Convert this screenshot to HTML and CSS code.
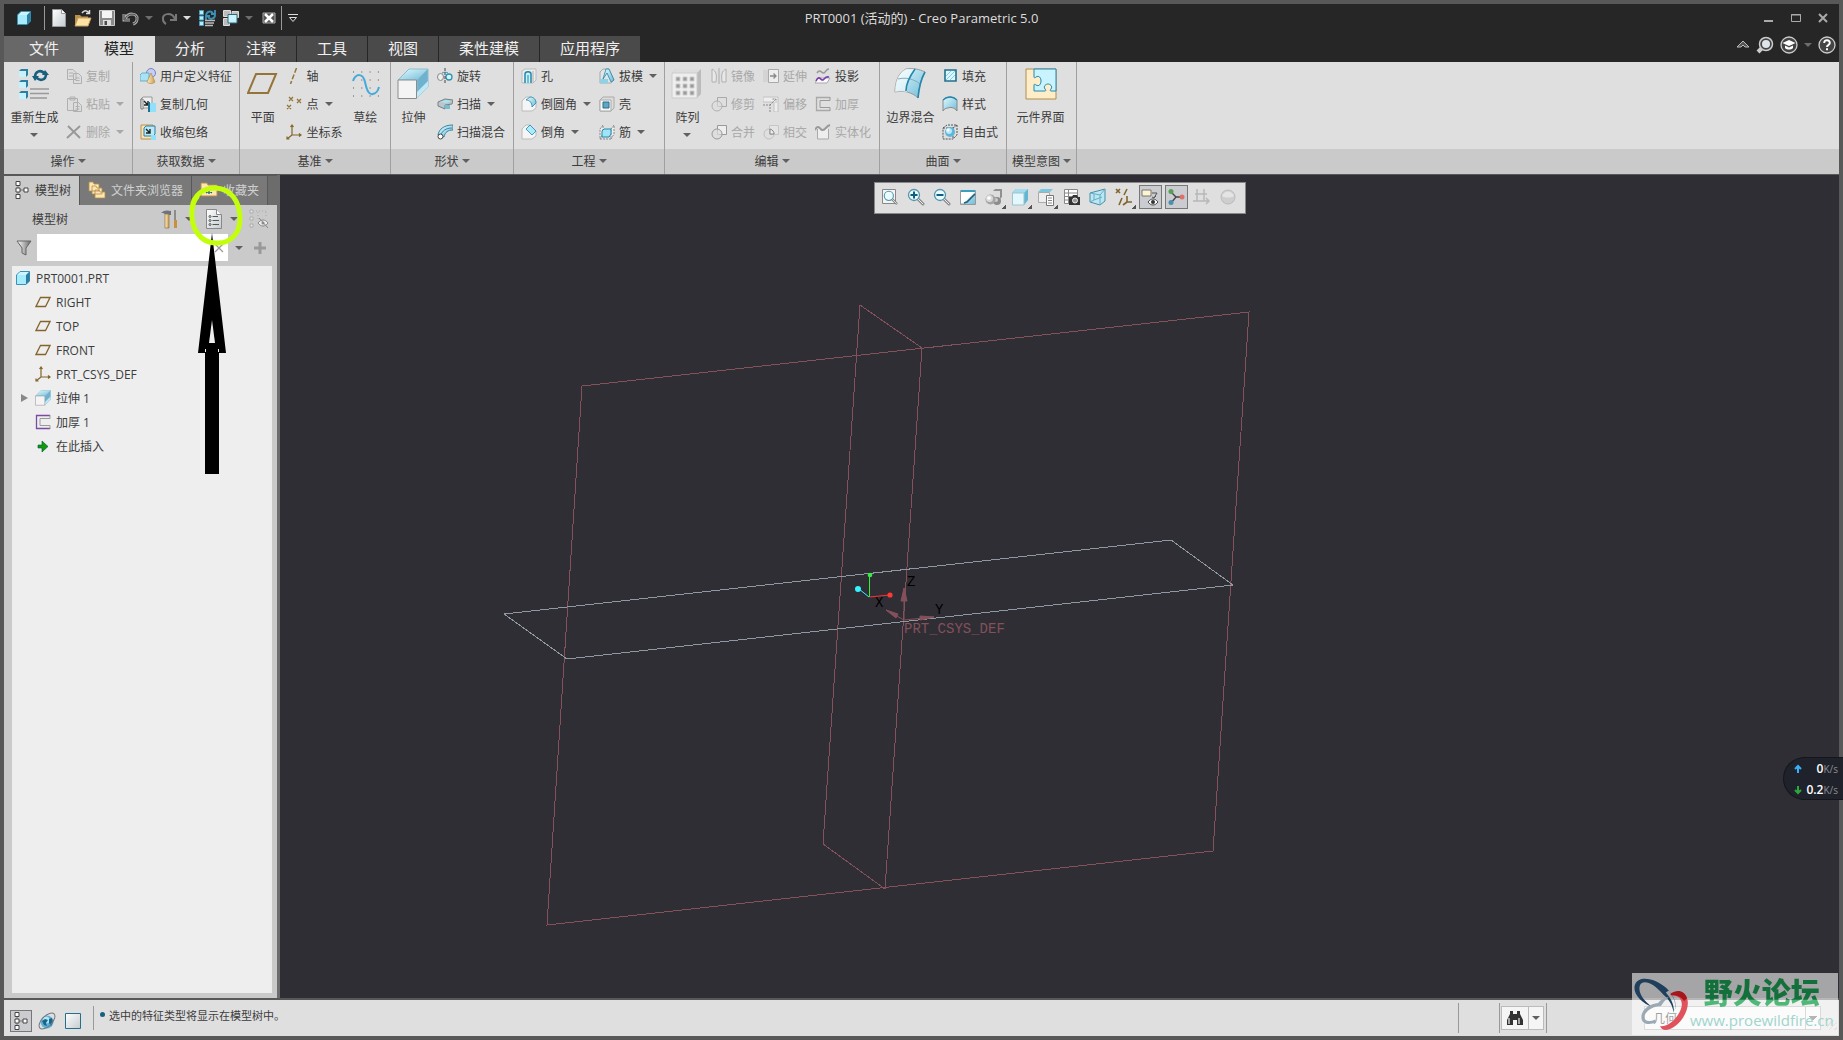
FILE: index.html
```html
<!DOCTYPE html>
<html lang="zh-CN">
<head>
    <meta charset="UTF-8">
    <meta name="viewport" content="width=device-width, initial-scale=1.0">
    <title>PRT0001 (活动的) - Creo Parametric 5.0</title>
    <link rel="stylesheet" href="styles.css">
</head>
<body>
    <!-- shared icons -->
    <svg class="defs" aria-hidden="true">
        <defs>
            <linearGradient id="gBlue" x1="0" y1="0" x2="1" y2="1"><stop offset="0" stop-color="#e4faff"/><stop offset="1" stop-color="#6fbcd8"/></linearGradient>
            <linearGradient id="gPaper" x1="0" y1="0" x2="1" y2="1"><stop offset="0" stop-color="#fff"/><stop offset="1" stop-color="#c4ccd0"/></linearGradient>
            <linearGradient id="gGold" x1="0" y1="0" x2="1" y2="0"><stop offset="0" stop-color="#fff0c8"/><stop offset="1" stop-color="#c89c50"/></linearGradient>
            <linearGradient id="gMetal" x1="0" y1="0" x2="1" y2="0"><stop offset="0" stop-color="#fff"/><stop offset="1" stop-color="#666"/></linearGradient>
        </defs>
        <symbol id="cube" viewBox="0 0 16 16">
            <path d="M1.500 5 5 1.500h9.500V11L11 14.500H1.500z" fill="#cdf5ff" stroke="#3b93b4"/>
            <path d="M11 5l3.500-3.500V11L11 14.500z" fill="#2a7fa3"/>
            <path d="M2 5h9v9H2z" fill="#a6ecfc"/>
        </symbol>
        <symbol id="plane" viewBox="0 0 16 16">
            <path d="M5.500 3.500h9.500l-4.500 9H1z" fill="none" stroke="#83652c" stroke-width="1.300"/>
        </symbol>
        <symbol id="csys" viewBox="0 0 16 16">
            <path d="M6 1v10h9M6 11l-5 4M4.500 3 6 1l1.500 2M13 9.500l2 1.500-2 1.500M1 12.500V15h2.500" fill="none" stroke="#83652c" stroke-width="1.200"/>
        </symbol>
        <symbol id="extrude" viewBox="0 0 32 32">
            <path d="M1 12 12 1h19L20 12z" fill="url(#gBlue)" stroke="#8abdd0"/>
            <path d="M20 12 31 1v18L20 30z" fill="#6fb2cf" stroke="#8abdd0"/>
            <path d="M20 24 31 13v6L20 30z" fill="#c0e8f4"/>
            <path d="M1 12h18.500v18.500H1z" fill="#f4f4f4" stroke="#8c8c8c"/>
        </symbol>
        <symbol id="thicken" viewBox="0 0 16 16">
            <path d="M15 1.500H1.500v13H15" fill="none" stroke="currentColor" stroke-width="1.300"/>
            <path d="M15 1v3.500H5v7h10V15" fill="none" stroke="#999"/>
        </symbol>
        <symbol id="treeicon" viewBox="0 0 16 20">
            <path d="M4 3v14M4 10h8" stroke="#777" fill="none"/>
            <path d="M2 1.500h4v4H2zM2 8h4v4H2zM2 14.500h4v4H2zM10 8h4v4h-4z" fill="#fff" stroke="#444"/>
        </symbol>
        <symbol id="lens" viewBox="0 0 18 18">
            <path d="M10 10l6 6" stroke="#888" stroke-width="3" stroke-linecap="round"/>
            <path d="M10 10l6 6" stroke="#eee" stroke-linecap="round"/>
            <circle cx="7" cy="7" r="5.500" fill="#e9fbff" stroke="#5594ac" stroke-width="1.300"/>
        </symbol>
    </svg>

    <div class="window">
        <header class="titlebar">
            <nav class="quick" aria-label="快速访问工具栏">
                <span class="app-icon"><svg class="i16"><use href="#cube"/></svg></span>
                <i class="vline"></i>
                <button aria-label="新建"><svg class="i18" viewBox="0 0 18 18"><path d="M2.500.5h9l4 4v13h-13z" fill="url(#gPaper)" stroke="#999"/><path d="M11.500.5v4h4" fill="#fff" stroke="#999"/></svg></button>
                <button aria-label="打开"><svg class="i18" viewBox="0 0 18 18"><path d="M1 6h5l1.500 1.500H14V16H1z" fill="#b98f4c"/><path d="M1 17l3-8h13l-3 8z" fill="#ffe3a4" stroke="#c8a15e"/><path d="M8 4c2-3 5-3 7 0M15.500 1v3.500H12" fill="none" stroke="#ddd" stroke-width="1.500"/></svg></button>
                <button aria-label="保存"><svg class="i18" viewBox="0 0 18 18"><path d="M1.500 1.500h15v15h-15z" fill="#8b8b8b" stroke="#ccc"/><path d="M4 2h10v7H4z" fill="#f4f4f4"/><path d="M5 11h8v5.500H5z" fill="#ddd"/><path d="M6.500 12h2.500v4H6.500z" fill="#4a4a4a"/></svg></button>
                <button aria-label="撤消"><svg class="i18" viewBox="0 0 18 18"><path d="M2 5v6h6M3 10c3-7 13-6 12 0 0 2-1 4-4 5" fill="none" stroke="#aaa" stroke-width="3"/><path d="M2 5v6h6M3 10c3-7 13-6 12 0 0 2-1 4-4 5" fill="none" stroke="#444"/></svg></button>
                <i class="caret dim"></i>
                <button aria-label="重做"><svg class="i18" viewBox="0 0 18 18"><path d="M16 5v6h-6M15 10C12 3 2 4 3 10c0 2 1 4 3 5" fill="none" stroke="#777" stroke-width="2"/></svg></button>
                <i class="caret light"></i>
                <button aria-label="重新生成模型"><svg class="i18" viewBox="0 0 18 18"><path d="M1.500 1.500h4v4h-4zM1.500 7h4v4h-4zM1.500 12.500h4v4h-4z" fill="#b9ecfa" stroke="#4f9cba"/><path d="M8 7c0-4 4-6 7-3M17 6c0 4-5 5-7 2M13 5h4V1M12 7H8v4" fill="none" stroke="#3b92b9" stroke-width="1.800"/><path d="M7 11.500h10M7 14h9M7 16.500h8" stroke="#bbb" stroke-width="1.500"/></svg></button>
                <button aria-label="窗口"><svg class="i18" viewBox="0 0 18 18"><path d="M1.500 1.500h7v6h-7zM10 2.500h6.500v6H10zM1.500 9.500h6v7h-6z" fill="#bbb" stroke="#ddd"/><path d="M6 5.500h9V14H6z" fill="#c8f4ff" stroke="#367"/></svg></button>
                <i class="caret dim"></i>
                <button aria-label="关闭窗口"><svg class="i18" viewBox="0 0 18 18"><path d="M3 4h12v10H3z" fill="#555" stroke="#aaa"/><path d="M5 5l8 8M13 5l-8 8" stroke="#fff" stroke-width="2.500"/></svg></button>
                <i class="vline"></i>
                <button class="slim" aria-label="自定义"><svg class="i10" viewBox="0 0 10 10"><path d="M0 1.500h10M1.500 4.500h7L5 8.500z" fill="none" stroke="#ddd"/></svg></button>
            </nav>
            <h1>PRT0001 (活动的) - Creo Parametric 5.0</h1>
            <div class="winbtns">
                <button aria-label="最小化"><svg class="i10" viewBox="0 0 10 10"><path d="M0 8h9" stroke="#aaa" stroke-width="2"/></svg></button>
                <button aria-label="最大化"><svg class="i10" viewBox="0 0 10 10"><path d="M.5 1.500h9v7h-9zM0 2h10" fill="none" stroke="#aaa"/></svg></button>
                <button aria-label="关闭"><svg class="i10" viewBox="0 0 10 10"><path d="M1 1l8 8M9 1L1 9" stroke="#aaa" stroke-width="2"/></svg></button>
            </div>
        </header>

        <div class="tabbar">
            <nav class="tabs">
                <button class="file">文件</button>
                <button class="active">模型</button>
                <button>分析</button>
                <button>注释</button>
                <button>工具</button>
                <button>视图</button>
                <button>柔性建模</button>
                <button>应用程序</button>
            </nav>
            <div class="help">
                <button aria-label="折叠功能区"><svg class="i14" viewBox="0 0 14 14"><path d="M1 9l6-6 6 6H9L7 7 5 9z" fill="#555" stroke="#bbb"/></svg></button>
                <button aria-label="搜索"><svg class="i18" viewBox="0 0 18 18"><path d="M6 12l-4 4" stroke="#ccc" stroke-width="4"/><circle cx="10" cy="8" r="6.500" fill="#444" stroke="#ccc" stroke-width="1.500"/><circle cx="10" cy="8" r="4" fill="#dfe6ea"/></svg></button>
                <button aria-label="学习"><svg class="i18" viewBox="0 0 18 18"><circle cx="9" cy="9" r="8" fill="#444" stroke="#ccc" stroke-width="1.300"/><path d="M2.500 7 9 4l6.500 3L9 10z" fill="#fff"/><path d="M5 9.500l4 2 4-2V12c-2 2-6 2-8 0z" fill="#fff"/></svg></button>
                <i class="caret dim"></i>
                <button aria-label="帮助"><svg class="i18" viewBox="0 0 18 18"><circle cx="9" cy="9" r="8" fill="#444" stroke="#ccc" stroke-width="1.300"/><path d="M6.200 7c0-4 5.800-3.500 5.600 0C11.600 9 9 9 9 11" fill="none" stroke="#fff" stroke-width="2"/><path d="M8 12.300h2v2H8z" fill="#fff"/></svg></button>
            </div>
        </div>

        <section class="ribbon">
            <div class="group">
                <div class="tools">
                    <button class="big wide"><svg class="i32" viewBox="0 0 32 32"><path d="M1 3l2-2h7v6l-2 2H1zM1 14l2-2h7v6l-2 2H1zM1 25l2-2h7v6l-2 2H1z" fill="#2a7fa3"/><path d="M1 3h7v6H1zM1 14h7v6H1zM1 25h7v6H1z" fill="#c5f2fc"/><path d="M17 9c0-5 5-8 9-4M28 6c0 6-6 8-10 3" fill="none" stroke="#195f80" stroke-width="2.600"/><path d="M14 8h7l-4 5zM24 7h7l-4-5z" fill="#195f80"/><path d="M12 21h19M12 25.500h19M12 30h17" stroke="#999" stroke-width="1.500"/></svg><span>重新生成</span><i class="caret"></i></button>
                    <div class="col">
                        <button disabled><svg class="i16" viewBox="0 0 16 16"><path d="M1.500 1.500H7l3 3v7H1.500z M7.500 5.500h5l3 3v7h-8z" fill="#ddd" stroke="#b0b0b0"/><path d="M3 5h4M3 8h4M9.500 10h4M9.500 12.500h4" stroke="#b0b0b0"/></svg>复制</button>
                        <button disabled><svg class="i16" viewBox="0 0 16 16"><path d="M1.500 2.500h10v12h-10zM4 1h5v3H4zM7.500 6.500h5l3 3v6h-8z" fill="#ddd" stroke="#b0b0b0"/><path d="M9.500 10.500h4M9.500 13h4" stroke="#b0b0b0"/></svg>粘贴<i class="caret"></i></button>
                        <button disabled><svg class="i16" viewBox="0 0 16 16"><path d="M2 2l12 12M14 2L1 14" stroke="#999" stroke-width="2"/></svg>删除<i class="caret"></i></button>
                    </div>
                </div>
                <button class="label">操作<i class="caret"></i></button>
            </div>

            <div class="group">
                <div class="tools">
                    <div class="col">
                        <button><svg class="i16" viewBox="0 0 16 16"><circle cx="11" cy="5" r="4.500" fill="#c5cff5" stroke="#7484bd"/><path d="M0 7l2-2h7v6l-2 2H0z" fill="#a6e4f5" stroke="#4a9ab7" stroke-width=".7"/><path d="M11 5l4 9c-2 2-6 2-8 0z" fill="url(#gGold)" stroke="#b98f4c" stroke-width=".7"/></svg>用户定义特征</button>
                        <button><svg class="i16" viewBox="0 0 16 16"><path d="M1 3l2-2h9v11H1z" fill="#eee" stroke="#999"/><path d="M1 3h2v10H1z" fill="#fff" stroke="#777"/><path d="M4 5l4 4M8 5v4H4" fill="none" stroke="#222" stroke-width="1.400"/><path d="M10 7h6v9h-6z" fill="#8fe0f8"/><path d="M8 6h2v10H8z" fill="#1d7092"/></svg>复制几何</button>
                        <button><svg class="i16" viewBox="0 0 16 16"><path d="M1 1h12v14H1z" fill="#fbe4b0" stroke="#b98f4c"/><path d="M4 4l2-2h9v8l-2 2H4z" fill="#b6eaf8" stroke="#2a7fa3"/><path d="M6 5l4 4M10 5v4H6" fill="none" stroke="#222" stroke-width="1.400"/><path d="M11 11h5v5h-5z" fill="#8fe0f8"/></svg>收缩包络</button>
                    </div>
                </div>
                <button class="label">获取数据<i class="caret"></i></button>
            </div>

            <div class="group">
                <div class="tools">
                    <button class="big"><svg class="i32" viewBox="0 0 32 32"><path d="M9 6h20l-8 19H1z" fill="none" stroke="#957439" stroke-width="2"/></svg><span>平面</span></button>
                    <div class="col">
                        <button><svg class="i16" viewBox="0 0 16 16"><path d="M10.500 0 4.500 16" stroke="#957439" stroke-width="1.500" stroke-dasharray="5 2"/></svg>轴</button>
                        <button><svg class="i16" viewBox="0 0 16 16"><path d="M3 1l4 4M7 1L3 5M11 3l4 4M15 3l-4 4M1 9l4 4M5 9l-4 4" stroke="#957439" stroke-width="1.300"/></svg>点<i class="caret"></i></button>
                        <button><svg class="i16"><use href="#csys"/></svg>坐标系</button>
                    </div>
                    <button class="big"><svg class="i32" viewBox="0 0 32 32"><path d="M4 4h26M4 12h26M4 20h26M4 28h26" stroke="#555" stroke-dasharray="1 7.300"/><path d="M4 13c3-8 10-8 12 1s4 13 8 12 5-3 6-7" fill="none" stroke="#43aad9" stroke-width="2"/></svg><span>草绘</span></button>
                </div>
                <button class="label">基准<i class="caret"></i></button>
            </div>

            <div class="group">
                <div class="tools">
                    <button class="big"><svg class="i32"><use href="#extrude"/></svg><span>拉伸</span></button>
                    <div class="col">
                        <button><svg class="i16" viewBox="0 0 16 16"><ellipse cx="3.500" cy="9" rx="3" ry="3.500" fill="#eee" stroke="#888"/><circle cx="12" cy="9" r="3" fill="#d5f5fc" stroke="#2f93b5" stroke-width="1.300"/><path d="M8 0v16" stroke="#444" stroke-dasharray="3 1"/><path d="M5 5c2-1 4-1 6 0" fill="none" stroke="#2f93b5"/></svg>旋转</button>
                        <button><svg class="i16" viewBox="0 0 16 16"><path d="M1 6l7-3 8 1-1 4-7 1v4L1 10z" fill="#bcc6ca" stroke="#738086"/><path d="M3 6l6-2 5 1-5 2z" fill="#a8e3f2"/><path d="M8 9h5v4H8z" fill="#76bdd4"/></svg>扫描<i class="caret"></i></button>
                        <button><svg class="i16" viewBox="0 0 16 16"><path d="M1 11C2 5 7 1 16 1v5c-5 0-8 2-9 7z" fill="url(#gBlue)" stroke="#3685a3"/><path d="M4 11C5 7 9 4 15 4" fill="none" stroke="#3685a3"/><circle cx="3.500" cy="12.500" r="2.500" fill="#fff" stroke="#444"/></svg>扫描混合</button>
                    </div>
                </div>
                <button class="label">形状<i class="caret"></i></button>
            </div>

            <div class="group">
                <div class="tools">
                    <div class="col">
                        <button><svg class="i16" viewBox="0 0 16 16"><path d="M1 3l3-2h11v11l-3 3H1z" fill="#eee" stroke="#bbb"/><path d="M4 15V6c0-3 6-3 6 0v9" fill="#c7f1fb" stroke="#2487ac" stroke-width="1.500"/><path d="M7 7v8" stroke="#2487ac"/><path d="M12 3v11" stroke="#aaa"/></svg>孔</button>
                        <button><svg class="i16" viewBox="0 0 16 16"><path d="M1 5l4-4h4c4 0 6 3 6 6v5l-4 3H1z" fill="#f5f5f5" stroke="#bbb"/><path d="M5 4l4-3c4 0 6 3 6 6l-4 4c0-4-2-7-6-7z" fill="url(#gBlue)" stroke="#2487ac" stroke-width=".8"/></svg>倒圆角<i class="caret"></i></button>
                        <button><svg class="i16" viewBox="0 0 16 16"><path d="M1 5l4-4h4l6 6v5l-4 3H1z" fill="#f5f5f5" stroke="#bbb"/><path d="M5 5l4-4 6 6-4 4z" fill="#a9ecfc" stroke="#2487ac" stroke-width=".8"/></svg>倒角<i class="caret"></i></button>
                    </div>
                    <div class="col">
                        <button><svg class="i16" viewBox="0 0 16 16"><path d="M1 4l3-3h6l5 11-3 3H1z" fill="#e4e4e4" stroke="#999" stroke-width=".8"/><path d="M4 11l3-10h3l5 11-3 2-4-9z" fill="url(#gBlue)" stroke="#2487ac" stroke-width=".8"/><path d="M1 11h8v4H1z" fill="#8bd3ea"/></svg>拔模<i class="caret"></i></button>
                        <button><svg class="i16" viewBox="0 0 16 16"><path d="M1 4l3-3h11v11l-3 3H1z" fill="#ddd" stroke="#aaa"/><path d="M1 4h11v11H1z" fill="#f6f6f6" stroke="#aaa"/><path d="M4 6h6v6H4z" fill="#5ca8c6" stroke="#2d6e88"/></svg>壳</button>
                        <button><svg class="i16" viewBox="0 0 16 16"><path d="M1 5l3-4v9l-3 5zM12 5l3-4v9l-3 5zM1 15h12" fill="#eee" stroke="#888" stroke-dasharray="2 1"/><path d="M3 7l2-2h7v5l-2 3H3z" fill="#9ee5f7" stroke="#2487ac"/></svg>筋<i class="caret"></i></button>
                    </div>
                </div>
                <button class="label">工程<i class="caret"></i></button>
            </div>

            <div class="group">
                <div class="tools">
                    <button class="big"><svg class="i32" viewBox="0 0 32 32"><path d="M1 5l4-4h25v25l-4 4z" fill="#bbb"/><path d="M1 5l4-4h25l-4 4z" fill="#ddd"/><path d="M1 5h25v25H1z" fill="#eee" stroke="#ccc"/><path d="M5 9h4v4H5zM12 9h4v4h-4zM19 9h4v4h-4zM5 16h4v4H5zM12 16h4v4h-4zM19 16h4v4h-4zM5 23h4v4H5zM12 23h4v4h-4zM19 23h4v4h-4z" fill="#999" stroke="#ccc"/></svg><span>阵列</span><i class="caret"></i></button>
                    <div class="col">
                        <button disabled><svg class="i16" viewBox="0 0 16 16"><path d="M1 1c4 2 5 5 4 13H1zM15 1c-4 2-5 5-4 13h4z" fill="#e8e8e8" stroke="#b0b0b0"/><path d="M8 0v16" stroke="#aaa"/></svg>镜像</button>
                        <button disabled><svg class="i16" viewBox="0 0 16 16"><path d="M6.500 1.500h9v9h-9z" fill="none" stroke="#aaa"/><circle cx="6" cy="10" r="5" fill="#ddd" fill-opacity=".6" stroke="#b0b0b0"/></svg>修剪</button>
                        <button disabled><svg class="i16" viewBox="0 0 16 16"><path d="M6.500 1.500h9v9h-9z" fill="#eee" stroke="#999"/><circle cx="6" cy="10" r="5" fill="#ddd" fill-opacity=".7" stroke="#999"/></svg>合并</button>
                    </div>
                    <div class="col">
                        <button disabled><svg class="i16" viewBox="0 0 16 16"><path d="M0 2h5v12H0z" fill="#d4d4d4"/><path d="M5.500 1.500h10v13h-10z" fill="#eee" stroke="#aaa"/><path d="M7 8h6M10.500 5.500 13 8l-2.500 2.500" fill="none" stroke="#888" stroke-width="1.300"/></svg>延伸</button>
                        <button disabled><svg class="i16" viewBox="0 0 16 16"><path d="M0 1h15v15h-4V6H0z" fill="#eee" stroke="#c2c2c2"/><path d="M0 9h7v7M7 9l6-6M9.500 3H13v3.500" fill="none" stroke="#888" stroke-dasharray="2 1"/></svg>偏移</button>
                        <button disabled><svg class="i16" viewBox="0 0 16 16"><path d="M6.500 1.500h9v9h-9z" fill="#e4e4e4" stroke="#c6c6c6"/><circle cx="6" cy="10" r="5" fill="none" stroke="#c0c0c0"/><path d="M7 5c3 1 4 3 4 5H7z" fill="#eee" stroke="#888"/></svg>相交</button>
                    </div>
                    <div class="col">
                        <button><svg class="i16" viewBox="0 0 16 16"><path d="M2 5c3-5 5 1 7 0s2-4 5-4" fill="none" stroke="#999" stroke-width="1.500"/><path d="M3 10h12l-3 5H0z" fill="#fafafa" stroke="#aaa"/><path d="M1 13c3-7 5 0 7-1s2-4 6-3" fill="none" stroke="#7a3fb0" stroke-width="1.600"/></svg>投影</button>
                        <button disabled><svg class="i16"><use href="#thicken"/></svg>加厚</button>
                        <button disabled><svg class="i16" viewBox="0 0 16 16"><path d="M2.500 5v10h11V5" fill="#eee" stroke="#aaa"/><path d="M0 6c3-6 5-1 7 0 4 1 3-4 8-5" fill="none" stroke="#999" stroke-width="2"/></svg>实体化</button>
                    </div>
                </div>
                <button class="label">编辑<i class="caret"></i></button>
            </div>

            <div class="group">
                <div class="tools">
                    <button class="big wide"><svg class="i32" viewBox="0 0 32 32"><path d="M1 24C1 11 6 4 12 1c7-1 13 0 19 3-4 7-6 15-7 26-6-6-15-8-23-6z" fill="url(#gBlue)" stroke="#999"/><path d="M1 24C1 11 6 4 12 1l9 0c-5 8-8 13-8 23-4-1-8-1-12 0z" fill="#fff" fill-opacity=".6"/><path d="M4 11c8-2 16 0 22 5" fill="none" stroke="#8ab"/><path d="M21 1c-5 7-9 14-9 22M31 4c-4 7-6 15-7 26" fill="none" stroke="#2487ac" stroke-width="1.600"/></svg><span>边界混合</span></button>
                    <div class="col">
                        <button><svg class="i16" viewBox="0 0 16 16"><path d="M3 2h11v11H3z" fill="#d9f7fd" stroke="#24708c" stroke-width="1.600"/><path d="M4 8l5-5M4 12l9-9M8 12l5-5" stroke="#8accdf"/></svg>填充</button>
                        <button><svg class="i16" viewBox="0 0 16 16"><path d="M1 4c4-4 10-4 14 0v11c-3-4-7-4-9-3-2 0-4 1-5 3z" fill="url(#gBlue)" stroke="#888"/><path d="M1 4c4-4 10-4 14 0" fill="none" stroke="#2487ac" stroke-width="1.300"/></svg>样式</button>
                        <button><svg class="i16" viewBox="0 0 16 16"><path d="M1 4l4-3h10v10l-4 4H1zM1 4h10v11M11 4l4-3" fill="none" stroke="#555" stroke-dasharray="2 1"/><circle cx="8" cy="8" r="5" fill="#5fb6d8"/><circle cx="7" cy="7" r="3" fill="#b5e8f8"/><circle cx="6" cy="6" r="1.500" fill="#fff"/></svg>自由式</button>
                    </div>
                </div>
                <button class="label">曲面<i class="caret"></i></button>
            </div>

            <div class="group">
                <div class="tools">
                    <button class="big fill"><svg class="i32" viewBox="0 0 32 32"><path d="M1 1h30v30H1z" fill="#ffedc7" stroke="#af8d4f"/><path d="M9 1h22v22h-5c-1 0-1-1 0-2 2-3-1-5-3-5s-5 2-3 5c1 1 1 2 0 2H9v-6c0-1 1-1 2 0 3 2 5-1 5-4s-2-6-5-4c-1 1-2 1-2 0z" fill="#c9f4ff" stroke="#2487ac"/></svg><span>元件界面</span></button>
                </div>
                <button class="label">模型意图<i class="caret"></i></button>
            </div>
            <div class="rest"></div>
        </section>

        <main class="main">
            <aside class="side">
                <nav class="sidetabs">
                    <button class="active"><svg class="tree-svg"><use href="#treeicon"/></svg>模型树</button>
                    <button><svg class="i18" viewBox="0 0 18 18"><path d="M1 1h4l1 2h5v7H1zM4 5h4l1 2h5v6H4zM7 9h4l1 2h5v6H7z" fill="#ffe6b0" stroke="#b38d51" stroke-width=".8"/></svg>文件夹浏览器</button>
                    <button><svg class="i18" viewBox="0 0 18 18"><path d="M1 2h6l1 2h9v11H1z" fill="#ffe6b0" stroke="#b38d51"/><path d="M9 6v7M6 8l6 4M12 8l-6 4" stroke="#17617c" stroke-width="1.300"/></svg>收藏夹</button>
                </nav>
                <div class="sidehead">
                    <h2>模型树</h2>
                    <button aria-label="设置"><svg class="i20" viewBox="0 0 20 20"><path d="M2 4c3-3 6-3 10-2v4H8L4 4z" fill="#6b7480"/><path d="M6 5h4v14H6z" fill="url(#gGold)" stroke="#94713a" stroke-width=".7"/><path d="M16 1v10" stroke="#777" stroke-width="1.500"/><path d="M15 11h3v8h-3z" fill="#c9913d"/></svg></button>
                    <i class="caret"></i>
                    <button aria-label="显示"><svg class="i20" viewBox="0 0 20 20"><path d="M2.500.5h10l5 5v14h-15z" fill="url(#gPaper)" stroke="#888"/><path d="M12.500.5v5h5" fill="#fff" stroke="#888"/><circle cx="6" cy="7.500" r="1" fill="none" stroke="#555"/><circle cx="6" cy="11.500" r="1" fill="none" stroke="#555"/><circle cx="6" cy="15.500" r="1" fill="none" stroke="#555"/><path d="M8.500 7.500H14M8.500 11.500H15M8.500 15.500H15" stroke="#555"/></svg></button>
                    <i class="caret"></i>
                    <button disabled aria-label="隐藏"><svg class="i20" viewBox="0 0 20 20"><path d="M1 1h3v3H1zM1 8h3v3H1zM1 15h3v3H1z" fill="#e8e8e8" stroke="#aaa"/><path d="M7 2h11M9 3v9M17 3v6" stroke="#aaa" stroke-dasharray="1 2"/><path d="M9 14c3-4 7-4 10 0-3 4-7 4-10 0z" fill="#eee" stroke="#888"/><circle cx="14" cy="14" r="1.500" fill="#888"/><path d="M10 9l9 10" stroke="#888"/></svg></button>
                </div>
                <div class="filter">
                    <svg class="i16" viewBox="0 0 16 16"><path d="M1 1h14l-5 7v7l-4-2V8z" fill="url(#gMetal)" stroke="#666"/></svg>
                    <div class="field">
                        <input type="text" aria-label="筛选模型树">
                        <button aria-label="清除"><svg class="i10" viewBox="0 0 10 10"><path d="M1 1l8 8M9 1L1 9" stroke="#999" stroke-width="1.200"/></svg></button>
                    </div>
                    <i class="caret"></i>
                    <button class="add" aria-label="添加"><svg class="i12" viewBox="0 0 12 12"><path d="M6 0v12M0 6h12" stroke="#999" stroke-width="3"/></svg></button>
                </div>
                <ul class="tree">
                    <li class="root"><svg class="i16"><use href="#cube"/></svg>PRT0001.PRT</li>
                    <li><svg class="i16"><use href="#plane"/></svg>RIGHT</li>
                    <li><svg class="i16"><use href="#plane"/></svg>TOP</li>
                    <li><svg class="i16"><use href="#plane"/></svg>FRONT</li>
                    <li><svg class="i16"><use href="#csys"/></svg>PRT_CSYS_DEF</li>
                    <li class="parent"><i class="expander"></i><svg class="i16"><use href="#extrude"/></svg>拉伸 1</li>
                    <li class="thick"><svg class="i16"><use href="#thicken"/></svg>加厚 1</li>
                    <li><svg class="i16" viewBox="0 0 16 16"><path d="M3 7h4V3l6 5.500L7 14v-4H3z" fill="#109a10" stroke="#053" stroke-width=".6"/></svg>在此插入</li>
                </ul>
                <!-- hand drawn marker over the display button -->
                <svg class="marker" viewBox="0 0 62 300" aria-hidden="true">
                    <path d="M25 53 11 173h7v121h14V173h7z"/>
                    <path d="M25 140l-3 23h6z" fill="#eee"/>
                    <path d="M18 169h1v3h-1zM31 169h1v3h-1z" fill="#eee"/>
                    <path d="M5 29C6 14 17 8 29 8c14 1 24 12 24 31 0 15-10 24-22 24C14 64 3 49 5 29c1-5 2-9 5-12" fill="none" stroke="#c3ff0c" stroke-width="5" stroke-linecap="round"/>
                </svg>
            </aside>

            <section class="canvas">
                <svg class="scene" viewBox="280 175 1559 823">
                    <path class="datum" d="M582 386 1249 312 1213 851 547 925zM860 305l62 43-37 541-62-45z"/>
                    <path class="datum sel" d="M504 614l667-74 62 45-666 74z"/>
                    <g class="axes">
                        <path d="M904 620V588M904 620l-18-10M904 620l30-3"/>
                        <path d="M901 601l3-13 3 13zM886 610l12 4-2 4zM934 617l-14-1v4z" fill="#84505a"/>
                    </g>
                    <path d="M869.500 597v-21" stroke="#36f036"/>
                    <path d="M869.500 597l20-2" stroke="#ff3030"/>
                    <path d="M869 597l-10-8" stroke="#37f3ff"/>
                    <circle cx="870" cy="575" r="2.300" fill="#30f040"/>
                    <circle cx="890" cy="595" r="2.600" fill="#ff3838"/>
                    <circle cx="858" cy="589" r="3" fill="#37f3ff"/>
                    <text x="907" y="586">Z</text>
                    <text x="875" y="607">X</text>
                    <text x="935" y="614">Y</text>
                    <text x="904" y="633" class="csys-name">PRT_CSYS_DEF</text>
                </svg>
                <div class="viewbar">
                    <button aria-label="重新调整"><svg class="i18" viewBox="0 0 18 18"><path d="M1.500 1.500h13v14h-13z" fill="#f4f4f4" stroke="#888"/><use href="#lens" x="2" y="2" width="15" height="15"/></svg></button>
                    <button aria-label="放大"><svg class="i18" viewBox="0 0 18 18"><use href="#lens" width="18" height="18"/><path d="M7 3.500v7M3.500 7h7" stroke="#0f5d80" stroke-width="2"/></svg></button>
                    <button aria-label="缩小"><svg class="i18" viewBox="0 0 18 18"><use href="#lens" width="18" height="18"/><path d="M3.500 7h7" stroke="#0f5d80" stroke-width="2"/></svg></button>
                    <button aria-label="重画"><svg class="i18" viewBox="0 0 18 18"><path d="M1.500 2.500h15v14h-15z" fill="url(#gBlue)" stroke="#999"/><path d="M2 4h14L5 15H2z" fill="#fff"/><path d="M2 3h14" stroke="#3aa0c2" stroke-width="2"/><path d="M5 15l3-1 8-8" fill="none" stroke="#245e78" stroke-width="1.600"/></svg></button>
                    <button class="more" aria-label="渲染"><svg class="i18" viewBox="0 0 18 18"><path d="M8 3l2-2h7v8l-2 2H8z" fill="#909090"/><path d="M8 3h7v7H8z" fill="#ddd"/><circle cx="12" cy="13" r="4" fill="#8c8c8c"/><circle cx="11" cy="12" r="2" fill="#ccc"/><circle cx="5.500" cy="11.500" r="5" fill="#a5a5a5"/><circle cx="4.500" cy="10.500" r="3.500" fill="#d8d8d8"/><circle cx="4" cy="10" r="1.800" fill="#fff"/></svg></button>
                    <button class="more" aria-label="显示样式"><svg class="i18" viewBox="0 0 18 18"><path d="M1 5l4-4h12v11l-4 5z" fill="#62b5d3"/><path d="M1 5l4-4h12l-4 4z" fill="#a5dced"/><path d="M1.500 5h11.500v12H1.500z" fill="#e2f8fd" stroke="#9fc3cf"/></svg></button>
                    <button class="more" aria-label="已保存方向"><svg class="i18" viewBox="0 0 18 18"><path d="M1 4l3-3h12l-3 3z" fill="#7bc6df"/><path d="M1.500 4.500h11v10h-11z" fill="#eee" stroke="#aaa"/><path d="M9.500 7.500h7v10h-7z" fill="#fff" stroke="#777"/><path d="M11 10h4M11 12.500h4M11 15h4" stroke="#888"/></svg></button>
                    <button aria-label="视图管理器"><svg class="i18" viewBox="0 0 18 18"><path d="M1.500 1.500h13v14h-13zM1 5h14M1 8.500h14M1 12h14M5.500 1v15" fill="#fff" stroke="#888"/><path d="M6 9h3l1-2h4l1 2h2v8H6z" fill="#333"/><circle cx="12" cy="12.500" r="2.500" fill="#999" stroke="#eee"/></svg></button>
                    <button aria-label="透视图"><svg class="i18" viewBox="0 0 18 18"><path d="M1 5l15-4v12l-5 4-10-3z" fill="#b9e7f3" stroke="#468da7"/><path d="M1 5l10 2 5-6M11 7v10M5 6v6l8-3M1 14l4-2" fill="none" stroke="#6aacc3"/></svg></button>
                    <button class="more" aria-label="基准显示"><svg class="i18" viewBox="0 0 18 18"><path d="M1 1l4 4M5 1L1 5M12 1 9 7M7 10l-3 7M12 8v6h5M12 14l-4 3" fill="none" stroke="#83652c" stroke-width="1.600"/></svg></button>
                    <button class="on" aria-label="注释显示"><svg class="i18" viewBox="0 0 18 18"><path d="M1 2h9v6H1z" fill="#fff3d0" stroke="#777"/><path d="M11 5h5l-3 5M11 9l2 1 2-2" fill="none" stroke="#555"/><path d="M7 14c3-4 7-4 10 0-3 4-7 4-10 0z" fill="#fff" stroke="#444"/><circle cx="12" cy="14" r="2" fill="#333"/></svg></button>
                    <button class="on" aria-label="旋转中心"><svg class="i18" viewBox="0 0 18 18"><path d="M4 4l5 5h6M9 9l-5 6" fill="none" stroke="#444" stroke-width="1.300"/><circle cx="4" cy="3.500" r="2.500" fill="#579e57"/><circle cx="15" cy="9" r="2.500" fill="#dd706b"/><circle cx="4" cy="14.500" r="2.500" fill="#4c8fae"/></svg></button>
                    <button disabled aria-label="模拟"><svg class="i18" viewBox="0 0 18 18"><path d="M4 1v12M11 1v12M2 6h12M0 13h16M13 10l3 3-3 3" fill="none" stroke="#b8b8b8" stroke-width="1.500"/></svg></button>
                    <button disabled aria-label="暂停"><svg class="i18" viewBox="0 0 18 18"><circle cx="9" cy="9" r="7" fill="#cecece" stroke="#bbb"/><path d="M3 8c2-6 10-6 12 0-3 2-9 2-12 0z" fill="#e4e4e4"/></svg></button>
                </div>
            </section>
        </main>

        <footer class="status">
            <button class="on" aria-label="模型树"><svg class="tree-svg"><use href="#treeicon"/></svg></button>
            <button aria-label="浏览器"><svg class="i18" viewBox="0 0 18 18"><circle cx="9" cy="10" r="6.500" fill="#58b4da"/><circle cx="8" cy="8" r="3.500" fill="#b4e4f6"/><path d="M4 9l3-2 3 1-2 3 1 3-3-1zM11 7l3-1 1 4-2 4-2-3z" fill="#17658b"/><ellipse cx="9" cy="9" rx="10" ry="5" transform="rotate(-45 9 9)" fill="none" stroke="#777"/></svg></button>
            <button aria-label="全屏"><svg class="i18" viewBox="0 0 18 18"><path d="M1.500 1.500h15v15h-15z" fill="url(#gPaper)" stroke="#24708c"/></svg></button>
            <i class="vline"></i>
            <p><i class="dot"></i>选中的特征类型将显示在模型树中。</p>
            <div class="find">
                <button aria-label="查找"><svg class="i18" viewBox="0 0 18 18"><path d="M4 2h3v3h4V2h3v3l3 6v5h-6v-5H7v5H1v-5l3-6z" fill="#333"/><path d="M3 9v6M13 9v6" stroke="#ccc" stroke-width="1.500"/></svg></button>
                <button class="drop" aria-label="查找选项"><i class="caret"></i></button>
            </div>
            <div class="picker">
                <select aria-label="选择过滤器"><option>几何</option></select>
            </div>
        </footer>
    </div>

    <div class="netspeed">
        <div><svg class="i10" viewBox="0 0 10 10"><path d="M5 9V2M2 5l3-3 3 3" fill="none" stroke="#36b1f5" stroke-width="2"/></svg><b>0</b><span>K/s</span></div>
        <div><svg class="i10" viewBox="0 0 10 10"><path d="M5 1v7M2 5l3 3 3-3" fill="none" stroke="#2da83a" stroke-width="2"/></svg><b>0.2</b><span>K/s</span></div>
    </div>

    <div class="watermark">
        <svg viewBox="0 0 58 58" aria-hidden="true">
            <path fill-rule="evenodd" d="M1 9C5-2 24 3 34 13c8 8 11 18 7 25-1-7-4-13-11-19C20 7 9 3 6 10c-2 7 4 16 13 22C8 28-2 18 1 9zM41 38c1-6-1-13-8-21l3-2c7 8 9 16 5 23z" fill="#1f3f5c"/>
            <path d="M38 20c6-5 14-5 17 3 4 12-8 31-22 33-3 0-5-2-6-4 9 1 19-9 22-19 2-8-2-13-11-13z" fill="#e0525c"/>
            <path d="M38 18c6-4 14-4 17 5l-3 3c-3-4-7-6-14-6z" fill="#a5161d"/>
            <path d="M36 22c-4 3-6 6-8 9-7 0-15 4-17 10-1 6 4 7 11 4l1 3c-9 4-17 1-15-8 2-7 9-11 17-12 2-3 6-6 11-6z" fill="#9ba9b5"/>
        </svg>
        <div>
            <strong>野火论坛</strong>
            <a href="http://www.proewildfire.cn">www.proewildfire.cn</a>
        </div>
    </div>
</body>
</html>
```
FILE: styles.css
```css
* {
    box-sizing: border-box;
}

body {
    margin: 0;
    font-family: "Open Sans", "Noto Sans CJK SC", sans-serif;
    font-size: 12px;
    color: #3c3c3c;
    overflow: hidden;
}

button {
    display: flex;
    align-items: center;
    justify-content: center;
    margin: 0;
    padding: 0;
    border: 0;
    background: none;
    font: inherit;
    color: inherit;
    white-space: nowrap;
}

svg {
    display: block;
    flex: none;
}

.defs {
    position: absolute;
    width: 0;
    height: 0;
}

.i10 { width: 10px; height: 10px; }
.i12 { width: 12px; height: 12px; }
.i14 { width: 14px; height: 14px; }
.i16 { width: 16px; height: 16px; }
.i18 { width: 18px; height: 18px; }
.i20 { width: 20px; height: 20px; }
.i32 { width: 32px; height: 32px; }
.tree-svg { width: 16px; height: 20px; }

.caret {
    flex: none;
    border: 4px solid transparent;
    border-top-color: #606060;
    border-bottom: 0;
}

.caret.dim { border-top-color: #6d6d6d; }
.caret.light { border-top-color: #ddd; }
:disabled .caret { border-top-color: #a8a8a8; }

.window {
    display: flex;
    flex-direction: column;
    height: 100vh;
    border: 4px solid #585858;
    background: #585858;
}

/* title bar */
.titlebar {
    display: grid;
    grid-template-columns: 1fr auto 1fr;
    align-items: center;
    height: 32px;
    padding-bottom: 4px;
    background: #262626;
}

.titlebar h1 {
    margin: 0;
    font-size: 13px;
    font-weight: normal;
    line-height: 20px;
    color: #ddd;
}

.quick {
    display: flex;
    align-items: center;
    height: 28px;
    padding-left: 12px;
}

.quick button { width: 24px; height: 24px; }
.quick .caret { margin: 0 4px 0 2px; }
.quick .slim { width: 16px; margin-left: 3px; }
.app-icon { margin-right: 12px; }
.app-icon + .vline { margin-right: 2px; }

.vline {
    width: 1px;
    height: 24px;
    background: #999;
}

.winbtns {
    display: flex;
    justify-content: flex-end;
    gap: 17px;
    padding-right: 11px;
}

/* ribbon tabs */
.tabbar {
    display: flex;
    justify-content: space-between;
    height: 26px;
    background: #262626;
}

.tabs {
    display: flex;
}

.tabs button {
    padding: 0 20px 3px;
    border-right: 1px solid #262626;
    background: #4a4a4a;
    font-size: 15px;
    color: #f0f0f0;
}

.tabs .file {
    padding: 0 25px 3px;
    border: 0;
    background: #686868;
}

.tabs .active {
    background: #dfdfdf;
    border-color: #dfdfdf;
    color: #222;
}

.help {
    display: flex;
    align-items: center;
    gap: 6px;
    padding: 0 3px 8px 0;
}

/* ribbon */
.ribbon {
    display: grid;
    grid-template-columns: 129px 107px 151px 123px 151px 215px 127px 70px 1fr;
    height: 112px;
    background: #dfdfdf;
}

.group {
    display: flex;
    flex-direction: column;
    border-right: 1px solid #a0a0a0;
}

.tools {
    display: flex;
    flex: 1;
    padding: 0 5px 0 3px;
}

.label {
    gap: 3px;
    height: 25px;
    padding-bottom: 2px;
    background: #cacaca;
}

.rest {
    align-self: end;
    height: 25px;
    background: #cacaca;
}

.big {
    flex-direction: column;
    justify-content: flex-start;
    width: 40px;
    padding-top: 6px;
}

.big.wide { width: 56px; }
.big.fill { flex: 1; }

.big span {
    margin: 9px 0 6px;
    line-height: 18px;
}

.col {
    display: flex;
    flex-direction: column;
    margin-left: 1px;
}

.col + .col { margin-left: 2px; }

.col button {
    justify-content: flex-start;
    height: 28px;
    padding: 0 3px;
    gap: 4px;
}

.col .caret { margin-left: 2px; }
.col button:disabled { color: #a8a8a8; }

/* model tree */
.main {
    display: flex;
    flex: 1;
    min-height: 0;
    padding: 1px 0 2px;
}

.side {
    position: relative;
    display: flex;
    flex-direction: column;
    width: 276px;
    border-right: 3px solid #6c6c6c;
    background: #cacaca;
}

.sidetabs {
    display: flex;
    height: 30px;
    border-top: 1px solid #585858;
    background: #6c6c6c;
}

.sidetabs button {
    gap: 5px;
    padding: 0 8px 2px;
    border-right: 1px solid #585858;
    background: #797979;
    color: #d0d0d0;
}

.sidetabs .active {
    padding: 0 8px 2px 10px;
    background: #cacaca;
    color: #3c3c3c;
}

.sidehead {
    display: flex;
    align-items: center;
    gap: 6px;
    height: 28px;
    padding: 0 8px 0 28px;
}

.sidehead h2 {
    flex: 1;
    margin: 0;
    font-size: 12px;
    font-weight: normal;
}

.sidehead .caret + button { margin-left: 5px; }

.filter {
    display: flex;
    align-items: center;
    height: 28px;
    padding: 1px 7px 0 12px;
}

.field {
    display: flex;
    flex: 1;
    min-width: 0;
    height: 27px;
    margin: 0 7px 0 5px;
    padding-right: 4px;
    background: #fff;
}

.field input {
    flex: 1;
    min-width: 0;
    border: 0;
    background: none;
}

.filter .add { margin-left: 11px; padding-right: 4px; }

.tree {
    flex: 1;
    margin: 5px 5px 5px 8px;
    padding: 0;
    list-style: none;
    background: #eee;
}

.tree li {
    display: flex;
    align-items: center;
    gap: 5px;
    height: 24px;
    padding-left: 23px;
}

.tree .root { padding-left: 3px; }
.tree .parent { padding-left: 9px; }
.tree .thick svg { color: #7a4aa5; }

.expander {
    margin-right: 2px;
    border: 4px solid transparent;
    border-left: 7px solid #888;
    border-right: 0;
}

.marker {
    position: absolute;
    top: 5px;
    left: 183px;
    width: 62px;
    height: 300px;
    pointer-events: none;
}

/* graphics area */
.canvas {
    position: relative;
    flex: 1;
    min-width: 0;
    background: #2f2e35;
}

.scene {
    width: 100%;
    height: 100%;
    fill: none;
}

.scene text {
    font-family: "Liberation Mono", monospace;
    font-size: 14px;
    fill: #000;
}

.scene .csys-name { fill: #84505a; }
.axes { stroke: #84505a; }

.datum {
    stroke: #84505a;
    shape-rendering: crispEdges;
}

.datum.sel { stroke: #8f98a0; }

.viewbar {
    position: absolute;
    top: 7px;
    left: 50%;
    transform: translateX(-50%);
    display: flex;
    align-items: center;
    gap: 3px;
    height: 32px;
    padding: 0 5px 2px 4px;
    border: 1px solid #888;
    background: #dfdfdf;
}

.viewbar button {
    width: 23px;
    height: 24px;
}

.viewbar .on, .status .on {
    border: 1px solid #777;
    background: #cbcccf;
}

.more {
    background: linear-gradient(135deg, transparent 50%, #555 50%) right bottom / 4px 4px no-repeat;
}

/* status bar */
.status {
    display: flex;
    align-items: center;
    height: 36px;
    padding-left: 6px;
    background: #dfdfdf;
}

.status > button {
    width: 22px;
    height: 22px;
    margin: 5px 4px 0 0;
}

.status p {
    display: flex;
    flex: 1;
    align-items: center;
    gap: 4px;
    margin: 0;
    padding: 0 0 7px 6px;
    font-size: 11px;
}

.status .vline { margin-left: 5px; }

.dot {
    width: 5px;
    height: 5px;
    border-radius: 50%;
    background: #17617c;
}

.find {
    display: flex;
    height: 30px;
    padding: 3px 2px;
    margin-right: 97px;
    border: solid #999;
    border-width: 0 1px;
}

.find::before {
    content: "";
    margin: -3px 42px -3px -44px;
    border-left: 1px solid #999;
}

.find button {
    width: 28px;
    border: 1px solid #bbb;
    background: #f5f5f5;
}

.find .drop {
    width: 15px;
    border-left: 0;
}

.picker {
    display: flex;
    padding-right: 18px;
    background: repeating-linear-gradient(135deg, #bbb 0 1px, transparent 1px 4px) right 2px bottom / 10px 10px no-repeat;
}

.picker select {
    width: 177px;
    height: 24px;
    padding: 0 8px;
    border: 1px solid #aaa;
    border-radius: 0;
    appearance: none;
    background:
        linear-gradient(to bottom left, transparent 50%, #444 50%) right 7px center / 4px 4px no-repeat,
        linear-gradient(to bottom right, transparent 50%, #444 50%) right 3px center / 4px 4px no-repeat,
        linear-gradient(#aaa, #aaa) right 14px center / 1px 24px no-repeat,
        #f5f5f5;
    background:
        conic-gradient(from -45deg at 50% 100%, #555 90deg, transparent 0) right 3px center / 8px 4px no-repeat,
        linear-gradient(#aaa, #aaa) right 14px center / 1px 24px no-repeat,
        #f5f5f5;
    font: inherit;
    color: #222;
}

/* floating network meter */
.netspeed {
    position: absolute;
    top: 757px;
    right: 0;
    width: 60px;
    height: 43px;
    padding: 0 5px 0 9px;
    border: 1px solid #14161c;
    border-right: 0;
    border-radius: 22px 0 0 22px;
    background: #1f222b;
    color: #fff;
}

.netspeed div {
    display: flex;
    align-items: center;
    height: 21px;
}

.netspeed b {
    flex: 1;
    font-weight: 600;
    font-size: 12px;
    text-align: right;
}

.netspeed span {
    color: #8b8d93;
    font-size: 10px;
}

.watermark {
    position: absolute;
    right: 5px;
    bottom: 5px;
    display: flex;
    width: 206px;
    height: 62px;
    padding: 3px 3px 3px 2px;
    background: rgba(255, 255, 255, 0.57);
}

.watermark svg {
    width: 56px;
    height: 56px;
}

.watermark div {
    display: flex;
    flex-direction: column;
    align-items: center;
}

.watermark strong {
    font-size: 29px;
    font-weight: 900;
    line-height: 34px;
    color: transparent;
    background: linear-gradient(#13703a 68%, #4fb878 72%);
    background-clip: text;
}

.watermark a {
    font-size: 15px;
    line-height: 20px;
    color: #9fd5cd;
    text-decoration: none;
}
```
